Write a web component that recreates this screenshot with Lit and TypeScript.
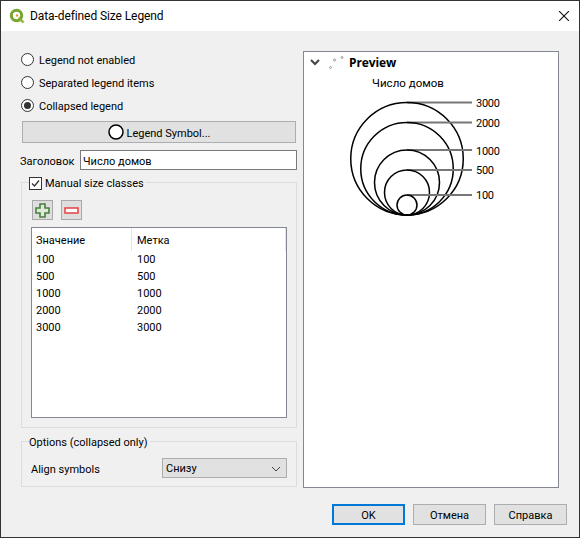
import { LitElement, css, html, svg } from "lit";
import { customElement } from "lit/decorators.js";

const sizes = [100, 500, 1000, 2000, 3000];

// top y of each circle in the legend preview, they all sit on the same bottom
const circles = [
  { label: "3000", top: 101.5, textY: 107 },
  { label: "2000", top: 121.5, textY: 127 },
  { label: "1000", top: 149, textY: 155 },
  { label: "500", top: 169, textY: 174 },
  { label: "100", top: 194, textY: 199 },
];

@customElement("app-root")
export class AppRoot extends LitElement {
  static styles = css`
    :host {
      display: block;
      width: 580px;
      height: 538px;
      font-family: "Roboto", "Noto Sans", sans-serif;
      font-size: 11px;
      color: #000;
    }

    .window {
      box-sizing: border-box;
      height: 538px;
      display: flex;
      flex-direction: column;
      background: #f0f0f0;
      border: 1px solid #333;
    }

    .titlebar {
      height: 30px;
      flex: none;
      display: flex;
      align-items: center;
      background: #fff;
      padding: 0 10px 0 8px;
      gap: 5px;
      font-size: 12px;
      letter-spacing: -0.09px;
    }

    .titlebar .title {
      flex: 1;
    }

    .body {
      flex: 1;
      display: grid;
      grid-template-columns: 276px 256px;
      column-gap: 6px;
      padding: 18px 0 0 20px;
    }

    .left {
      display: flex;
      flex-direction: column;
    }

    .radio-row {
      height: 23px;
      display: flex;
      align-items: center;
      gap: 5px;
    }

    .radio {
      box-sizing: border-box;
      width: 13px;
      height: 13px;
      margin-top: -2px;
      border: 1px solid #333;
      border-radius: 50%;
      background: #fff;
      display: flex;
      align-items: center;
      justify-content: center;
    }

    .radio.on::after {
      content: "";
      width: 7px;
      height: 7px;
      border-radius: 50%;
      background: #333;
    }

    .btn {
      box-sizing: border-box;
      background: #e1e1e1;
      border: 1px solid #adadad;
      padding-top: 1px;
      display: flex;
      align-items: center;
      justify-content: center;
    }

    .symbol-btn {
      height: 22px;
      margin: 3px 1px 0;
      padding-top: 2px;
      gap: 3px;
    }

    .symbol-btn svg {
      margin-top: -2px;
    }

    .title-row {
      display: flex;
      align-items: center;
      height: 20px;
      margin: 7px 0 0 -1px;
    }

    .title-row label {
      width: 60px;
      padding-top: 2px;
    }

    .input {
      box-sizing: border-box;
      flex: 1;
      height: 20px;
      background: #fff;
      border: 1px solid #7a7a7a;
      padding: 2px 0 0 2px;
      display: flex;
      align-items: center;
    }

    .group {
      position: relative;
      box-sizing: border-box;
      border: 1px solid #dcdcdc;
    }

    .group-title {
      position: absolute;
      top: -8px;
      left: 7px;
      background: #f0f0f0;
      padding: 0 2px 0 0;
      display: flex;
      align-items: center;
      gap: 3px;
      height: 16px;
    }

    .classes {
      height: 246px;
      margin-top: 12px;
      padding: 17px 9px 9px;
      display: flex;
      flex-direction: column;
    }

    .check {
      box-sizing: border-box;
      width: 13px;
      height: 13px;
      border: 1px solid #333;
      background: #fff;
      display: flex;
    }

    .tools {
      display: flex;
      gap: 8px;
      margin-left: 1px;
    }

    .tool {
      width: 21px;
      height: 20px;
      padding-top: 0;
      background: #dedede;
      border-color: #a8a8a8;
    }

    .table {
      box-sizing: border-box;
      flex: 1;
      margin-top: 7px;
      background: #fff;
      border: 1px solid #828790;
      display: grid;
      grid-template-columns: 100px 1fr;
      grid-auto-rows: 17px;
      grid-template-rows: 23px;
    }

    .table .th {
      display: flex;
      align-items: center;
      padding: 2px 0 0 4px;
      border-right: 1px solid #e5e5e5;
    }

    .table .th:nth-child(2) {
      padding-left: 5px;
    }

    .table .td {
      display: flex;
      align-items: center;
      padding-left: 4px;
    }

    .table .td.label {
      padding-left: 5px;
    }

    .options {
      height: 46px;
      margin-top: 13px;
      padding: 16px 9px 0;
      display: flex;
      align-items: flex-start;
      justify-content: space-between;
    }

    .options .name {
      height: 20px;
      padding-top: 1px;
      display: flex;
      align-items: center;
    }

    .combo {
      box-sizing: border-box;
      width: 125px;
      height: 20px;
      justify-content: space-between;
      padding: 1px 5px 0 3px;
    }

    .preview {
      box-sizing: border-box;
      height: 437px;
      margin-top: 2px;
      background: #fff;
      border: 1px solid #828790;
    }

    .preview svg {
      display: block;
    }

    .preview text {
      font-family: "Roboto", "Noto Sans", sans-serif;
      font-size: 11px;
      fill: #000;
    }

    .preview text.head {
      font-family: "Open Sans", "Noto Sans", sans-serif;
      font-size: 12px;
      font-weight: 700;
      letter-spacing: -0.1px;
    }

    .preview text.caption {
      font-size: 11.5px;
    }

    .preview text.size {
      letter-spacing: -0.3px;
    }

    .footer {
      display: flex;
      justify-content: flex-end;
      gap: 8px;
      padding: 0 12px 12px 0;
    }

    .footer .btn {
      width: 73px;
      height: 21px;
    }

    .footer .btn.default {
      border: 2px solid #0078d7;
    }
  `;

  private qgisIcon() {
    return html`<svg width="16" height="16" viewBox="0 0 16 16">
      <path d="M9.5 9.5l5.2 5" stroke="#b5c95e" stroke-width="2.6" fill="none"/>
      <circle cx="7.5" cy="7.5" r="5.2" fill="none" stroke="#76a531" stroke-width="3"/>
      <path d="M10.5 11.2l3.4 3.2" stroke="#8bb23f" stroke-width="1.6" fill="none"/>
      <circle cx="8" cy="7.5" r="1.2" fill="#e2913a"/>
    </svg>`;
  }

  private closeIcon() {
    return html`<svg width="10" height="10" viewBox="0 0 10 10">
      <path d="M0 0l10 10M10 0L0 10" stroke="#111" stroke-width="1.1" fill="none"/>
    </svg>`;
  }

  private previewSvg() {
    const bottom = 163;
    const cx = 103;
    return html`<svg width="254" height="435" viewBox="0 0 254 435">
      <path d="M7 8l4 4 4-4" fill="none" stroke="#444" stroke-width="2"/>
      <g fill="#fff" stroke="#999" stroke-width="1">
        <circle cx="26.5" cy="15.5" r="1"/>
        <circle cx="30.5" cy="8" r="1"/>
        <circle cx="38" cy="5.5" r="1"/>
      </g>
      <text class="head" x="45" y="15">Preview</text>
      <text class="caption" x="104" y="35" text-anchor="middle">Число домов</text>
      ${circles.map((c) => {
        const top = c.top - 51;
        const r = (bottom - top) / 2;
        return svg`
          <line x1=${cx} x2="168" y1=${top} y2=${top} stroke="#777" stroke-width="2"/>
          <circle cx=${cx} cy=${top + r} r=${r} fill="none" stroke="#000" stroke-width="1.5"/>
          <text class="size" x="172" y=${c.textY - 52}>${c.label}</text>
        `;
      })}
    </svg>`;
  }

  render() {
    return html`
      <div class="window">
        <div class="titlebar">
          ${this.qgisIcon()}
          <span class="title">Data-defined Size Legend</span>
          ${this.closeIcon()}
        </div>
        <div class="body">
          <div class="left">
            <div class="radio-row"><span class="radio"></span>Legend not enabled</div>
            <div class="radio-row"><span class="radio"></span>Separated legend items</div>
            <div class="radio-row"><span class="radio on"></span>Collapsed legend</div>
            <div class="btn symbol-btn">
              <svg width="16" height="16" viewBox="0 0 16 16">
                <circle cx="8" cy="8" r="7" fill="#fff" stroke="#000" stroke-width="1.5"/>
              </svg>
              Legend Symbol...
            </div>
            <div class="title-row">
              <label>Заголовок</label>
              <div class="input">Число домов</div>
            </div>
            <div class="group classes">
              <div class="group-title">
                <span class="check">
                  <svg width="11" height="11" viewBox="0 0 11 11">
                    <path d="M2 5.5l2.5 2.5L9 2.5" fill="none" stroke="#333" stroke-width="1.3"/>
                  </svg>
                </span>
                Manual size classes
              </div>
              <div class="tools">
                <div class="btn tool">
                  <svg width="15" height="15" viewBox="0 0 15 15">
                    <path d="M5 1h5v4h4v5h-4v4H5v-4H1V5h4z" fill="#dcebd6" stroke="#4a7d3f" stroke-width="1.6"/>
                  </svg>
                </div>
                <div class="btn tool">
                  <svg width="15" height="7" viewBox="0 0 15 7">
                    <rect x="1" y="1" width="13" height="5" fill="#fff" stroke="#e8494a" stroke-width="1.6"/>
                  </svg>
                </div>
              </div>
              <div class="table">
                <div class="th">Значение</div>
                <div class="th">Метка</div>
                ${sizes.map(
                  (s) => html`<div class="td">${s}</div><div class="td label">${s}</div>`
                )}
              </div>
            </div>
            <div class="group options">
              <div class="group-title">Options (collapsed only)</div>
              <span class="name">Align symbols</span>
              <div class="btn combo">
                Снизу
                <svg width="10" height="6" viewBox="0 0 10 6">
                  <path d="M1 1l4 4 4-4" fill="none" stroke="#444" stroke-width="1"/>
                </svg>
              </div>
            </div>
          </div>
          <div class="preview">${this.previewSvg()}</div>
        </div>
        <div class="footer">
          <div class="btn default">OK</div>
          <div class="btn">Отмена</div>
          <div class="btn">Справка</div>
        </div>
      </div>
    `;
  }
}
